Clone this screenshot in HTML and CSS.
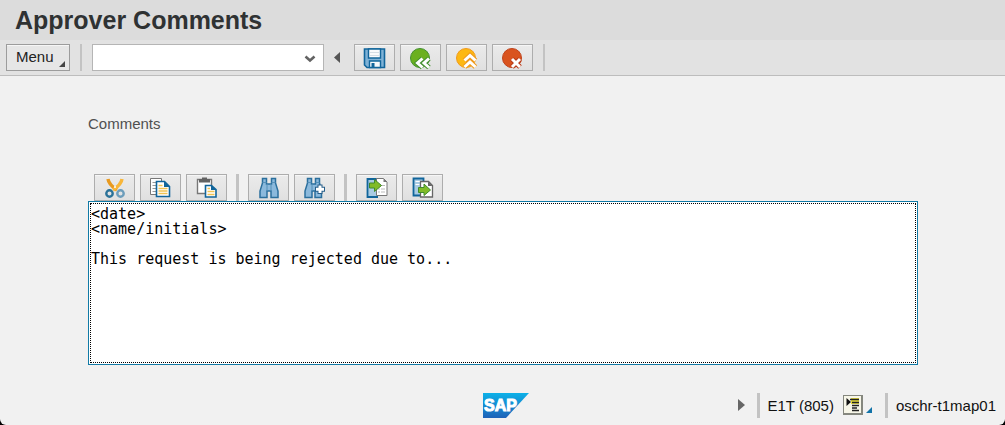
FILE: index.html
```html
<!DOCTYPE html>
<html lang="en">
<head>
    <meta charset="UTF-8">
    <meta name="viewport" content="width=device-width, initial-scale=1.0">
    <title>Approver Comments</title>
    <link rel="stylesheet" href="styles.css">
</head>
<body>
    <h1 class="title">Approver Comments</h1>

    <header class="menubar">
        <button class="menu-btn">Menu</button>
        <span class="sep"></span>
        <div class="command">
            <input type="text" class="command-input" aria-label="Command">
            <button class="command-open" aria-label="Open history">
                <svg width="12" height="8" viewBox="0 0 12 8"><path d="M1.5 1.5 6 5.5l4.5-4" fill="none" stroke="#636363" stroke-width="2.6"/></svg>
            </button>
        </div>
        <button class="collapse" aria-label="Hide command field">
            <svg width="6" height="11" viewBox="0 0 6 11"><path d="M6 0v11L0 5.500z" fill="#555"/></svg>
        </button>
        <div class="tools">
            <button class="tool" aria-label="Save">
                <svg width="24" height="24" viewBox="0 0 24 24">
                    <path d="M1.500 3h20v18.500H4L1.500 19z" fill="#7fb2d6" stroke="#11659b" stroke-width="1.600"/>
                    <path d="M5.500 3h12v9h-12z" fill="#f8fafb" stroke="#11659b" stroke-width="1.400"/>
                    <path d="M7 6.500h9M7 9.500h9" stroke="#d5dee5"/>
                    <path d="M6.500 15h11v6.500h-11z" fill="#f4f8fb" stroke="#11659b" stroke-width="1.400"/>
                    <path d="M8.500 17h3v4h-3z" fill="#11659b"/>
                </svg>
            </button>
            <button class="tool" aria-label="Back">
                <svg width="24" height="24" viewBox="0 0 24 24">
                    <circle cx="11" cy="12" r="9.500" fill="#6bb01f" stroke="#43902f"/>
                    <g fill="none"><path d="m13.500 12.500-5 4.500 5 4.500m6.500-9-5 4.500 5 4.500" stroke="#43902f" stroke-width="5"/>
                    <path d="m13.500 12.500-5 4.500 5 4.500m6.500-9-5 4.500 5 4.500" stroke="#fff" stroke-width="3"/></g>
                </svg>
            </button>
            <button class="tool" aria-label="Exit">
                <svg width="24" height="24" viewBox="0 0 24 24">
                    <circle cx="11" cy="12" r="9.500" fill="#fdb813" stroke="#f09a1c"/>
                    <g fill="none"><path d="m9.500 14.500 5.500-5 5.500 5m-11 6.500 5.500-5 5.500 5" stroke="#f09a1c" stroke-width="5"/>
                    <path d="m9.500 14.500 5.500-5 5.500 5m-11 6.500 5.500-5 5.500 5" stroke="#fff" stroke-width="3"/></g>
                </svg>
            </button>
            <button class="tool" aria-label="Cancel">
                <svg width="24" height="24" viewBox="0 0 24 24">
                    <circle cx="11" cy="12" r="9.500" fill="#d9531e" stroke="#c0431c"/>
                    <path d="m11 13 8 8m0-8-8 8" stroke="#b83b18" stroke-width="5"/>
                    <path d="m11 13 8 8m0-8-8 8" stroke="#fff" stroke-width="3"/>
                </svg>
            </button>
        </div>
        <span class="sep"></span>
    </header>

    <main class="content">
        <label class="label" for="comments">Comments</label>

        <div class="tools editor-tools">
            <button class="tool" aria-label="Cut">
                <svg width="24" height="24" viewBox="0 0 24 24" fill="none">
                    <path d="M5 3c.5 4 3 7 9 11" stroke="#e99a1f" stroke-width="3.400"/>
                    <path d="M19 3c-.5 4-3 7-9 11" stroke="#f8b63a" stroke-width="3.400"/>
                    <circle cx="12" cy="11" r="1" fill="#fff"/>
                    <circle cx="6.500" cy="17.500" r="3.200" stroke="#2b7298" stroke-width="2.400"/>
                    <circle cx="17.500" cy="17.500" r="3.200" stroke="#6c9dbb" stroke-width="2.400"/>
                </svg>
            </button>
            <button class="tool" aria-label="Copy">
                <svg width="24" height="24" viewBox="0 0 24 24">
                    <path d="M1.500 2.500h11v16h-11z" fill="#fff" stroke="#777"/>
                    <path d="M3.500 6.500h4m-4 3h4m-4 3h4m-4 3h4" stroke="#999"/>
                    <path d="M7.500 5.500h8l5 5v10h-13z" fill="#fff" stroke="#11659b" stroke-width="1.600"/>
                    <path d="M15 5v6h6z" fill="#11659b"/>
                    <path d="M9.500 9.500h4m-4 3h9m-9 2.500h9m-9 2.500h9" stroke="#f1c453" stroke-width="1.400"/>
                </svg>
            </button>
            <button class="tool" aria-label="Paste">
                <svg width="24" height="24" viewBox="0 0 24 24">
                    <path d="M2.500 3.500h14v14h-14z" fill="#fff" stroke="#777" stroke-width="1.400"/>
                    <path d="M4 3h3V1.500h5V3h3v3.500H4z" fill="#626262"/>
                    <path d="M10.500 9.500h6l4.500 4v7.500H10.500z" fill="#fff" stroke="#11659b" stroke-width="1.600"/>
                    <path d="M16 9v5h5.500z" fill="#11659b"/>
                    <path d="M12.500 12.500h2.500m-2.500 3h7m-7 3h7" stroke="#f1c453" stroke-width="1.600"/>
                </svg>
            </button>
            <span class="sep"></span>
            <button class="tool" aria-label="Find">
                <svg width="24" height="24" viewBox="0 0 24 24">
                    <path d="M5.500 2.500h4V8h5V2.500h4V7l2.500 8v6.500h-7V15h-4v6.500H3V15l2.500-8z" fill="#8bb9dc" stroke="#2b6f9d" stroke-width="1.500"/>
                    <path d="M5.500 6.500h4m5 0h4M10 8v7m4-7v7" stroke="#5590b8"/>
                </svg>
            </button>
            <button class="tool" aria-label="Find next">
                <svg width="24" height="24" viewBox="0 0 24 24">
                    <path d="M4.500 2.500h4V8h4V2.500h4V7l2 8v6.500H12V15H9v6.500H2V15l2.500-8z" fill="#8bb9dc" stroke="#2b6f9d" stroke-width="1.500"/>
                    <path d="M4.500 6.500h4m4 0h4M9 8v7" stroke="#5590b8"/>
                    <path d="M17 8.500v9.500M12 13.250h10" stroke="#245d88" stroke-width="5"/>
                    <path d="M17 9.500v7.500M13 13.250h8" stroke="#fff" stroke-width="3"/>
                </svg>
            </button>
            <span class="sep"></span>
            <button class="tool" aria-label="Load local file">
                <svg width="24" height="24" viewBox="0 0 24 24">
                    <path d="M13 3H2.500v18H13" fill="#a9cbe3" stroke="#11659b" stroke-width="1.800"/>
                    <path d="M11.500 2.500h7l3.500 3.500v13.500H11.500z" fill="#fff" stroke="#777"/>
                    <path d="M18.500 2.500V6H22z" fill="#777"/>
                    <path d="M16 9.500h4m-7 3.500h2m1 0h4m-7 3h2m1 0h4" stroke="#bbb"/>
                    <path d="M4.500 7H9.500V3.500L16.500 9.500 9.500 15.500V12h-5z" fill="#80bb28" stroke="#3f8a2c"/>
                </svg>
            </button>
            <button class="tool" aria-label="Save as local file">
                <svg width="24" height="24" viewBox="0 0 24 24">
                    <path d="M2.500 2.500h10v17h-10z" fill="#a9cbe3" stroke="#11659b" stroke-width="1.800"/>
                    <path d="M4.500 5.500h6m-6 3h4" stroke="#fff"/>
                    <path d="M9.500 5.500h8l4 4v11.500h-12z" fill="#fff" stroke="#666" stroke-width="1.300"/>
                    <path d="M17 5.500V10h4.500z" fill="#666"/>
                    <path d="M7.500 11.500H13V8l6.500 6-6.500 5.500V16.500H7.500z" fill="#80bb28" stroke="#3f8a2c"/>
                </svg>
            </button>
        </div>

        <textarea id="comments" class="comments" rows="10" spellcheck="false">&lt;date&gt;
&lt;name/initials&gt;

This request is being rejected due to...</textarea>
    </main>

    <footer class="statusbar">
        <svg class="logo" width="46" height="25" viewBox="0 0 46 25" role="img" aria-label="SAP">
            <defs>
                <linearGradient id="sap" x1="0" y1="0" x2="0" y2="1">
                    <stop offset="0" stop-color="#0cb1e8"/>
                    <stop offset="1" stop-color="#1e62b8"/>
                </linearGradient>
            </defs>
            <path d="M0 0h46L23 25H0z" fill="url(#sap)"/>
            <text class="logo-text" x="1" y="18">SAP</text>
        </svg>
        <div class="status">
            <button class="expand" aria-label="Show status fields">
                <svg width="7" height="12" viewBox="0 0 7 12"><path d="M0 0v12l7-6z" fill="#666"/></svg>
            </button>
            <span class="sep"></span>
            <span class="system">E1T (805)</span>
            <button class="info" aria-label="System information">
                <svg width="30" height="20" viewBox="0 0 30 20">
                    <path d="M0 0h20v20H0z" fill="#85877e"/>
                    <path d="M1 1h17v17H1z" fill="#f7f6e8"/>
                    <path d="M8 3h8v6H8z" fill="#e8dc3c"/>
                    <path d="M3.500 3v8L8 7z" fill="#111"/>
                    <path d="M7 4.500h9M9 7.500h7m-7 3h7m-7 2.500h5m-5 2.500h7" stroke="#222" stroke-width="1.300"/>
                    <path d="M29 12v6h-6z" fill="#1173a8"/>
                </svg>
            </button>
            <span class="sep"></span>
            <span class="server">oschr-t1map01</span>
        </div>
    </footer>
</body>
</html>
```
FILE: styles.css
```css
* { box-sizing: border-box; }
html { background: #000; }
body { margin: 0; min-height: 100vh; display: flex; flex-direction: column; background: #f1f1f1; border-radius: 0 0 6px 6px; color: #222; font-family: "Liberation Sans", Arial, sans-serif; font-size: 15px; }
button { margin: 0; padding: 0; border: none; background: none; color: inherit; font: inherit; cursor: pointer; }
svg { display: block; }

.title { margin: 0; padding: 0 15px; background: #dcdcdc; color: #2f3233; font-size: 25px; line-height: 40px; }

.menubar { display: flex; align-items: center; height: 36px; padding: 0 6px; background: #e2e2e2; border-bottom: 1px solid #bdbdbd; }
.menu-btn { position: relative; width: 64px; height: 27px; padding: 0 16px 2px 9px; border: 1px solid #9c9c9c; background: #e6e6e6; box-shadow: inset 0 1px #f6f6f6; text-align: left; }
.menu-btn::after { content: ""; position: absolute; right: 4px; bottom: 3px; border: 3px solid transparent; border-right-color: #444; border-bottom-color: #444; }
.sep { flex: none; width: 2px; height: 27px; margin: 0 10px; background: #c3c3c3; }
.command { display: flex; width: 232px; height: 27px; border: 1px solid #b5b5b5; background: #fff; }
.command-input { flex: 1; min-width: 0; border: none; padding: 0 6px; background: none; font: inherit; }
.command-open { padding: 2px 7px 0; }
.collapse { margin: 0 14px 0 10px; }

.tools { display: flex; gap: 5px; }
.tool { display: flex; align-items: center; justify-content: center; width: 41px; height: 27px; border: 1px solid #adadad; background: linear-gradient(#ebebeb, #e0e0e0); box-shadow: inset 0 1px #f6f6f6; }

.content { padding: 39px 87px 20px 88px; }
.label { display: block; color: #505050; line-height: 18px; }
.editor-tools { margin-top: 41px; padding-left: 6px; }
.editor-tools .sep { width: 3px; margin: 0 4px; }
.comments { display: block; width: 100%; padding: 5px 2px 7px; border: 1px solid #117aa6; outline: 1px dotted #000; outline-offset: -3px; border-radius: 0; background: #fff; color: #000; font-family: "DejaVu Sans Mono", monospace; font-size: 15px; line-height: 15px; resize: none; }

.statusbar { display: grid; grid-template-columns: 1fr auto 1fr; align-items: center; height: 40px; margin-top: auto; padding: 0 9px 0 15px; color: #111; }
.logo { grid-column: 2; }
.logo-text { fill: #fff; stroke: #fff; font-family: "Liberation Sans", Arial, sans-serif; font-size: 16px; font-weight: bold; }
.status { display: flex; align-items: center; justify-content: flex-end; }
.status .sep { width: 3px; height: 25px; margin: 0 8px 0 12px; }
.info { margin-left: 9px; }
```
